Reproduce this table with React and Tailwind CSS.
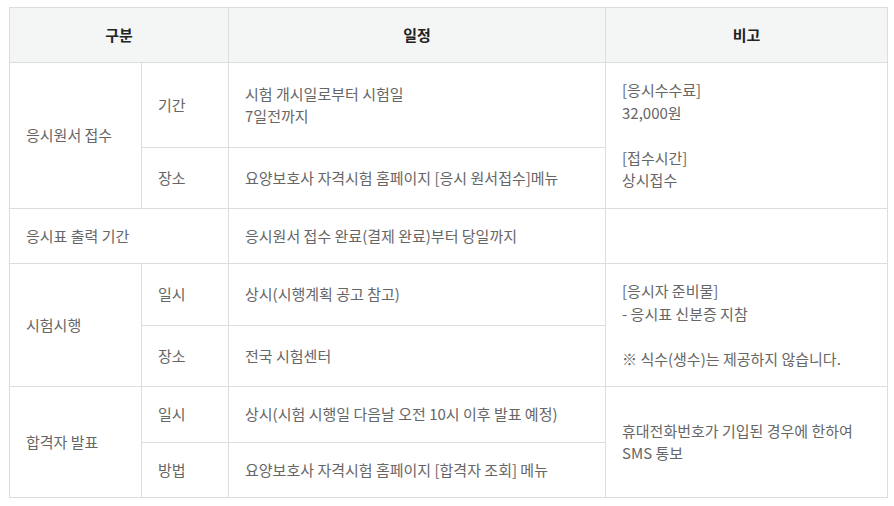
export default function App() {
  const td = "border border-[#dddddd] px-4 py-4 align-middle text-left";
  return (
    <div className="bg-white pt-[7px] pl-[9px] pr-[8px] w-[894px] h-[506px]" style={{ fontFamily: '"Noto Sans CJK KR", "Noto Sans", sans-serif' }}>
      <table className="w-[878px] border-collapse table-fixed text-[15px] leading-[1.5] text-[#666666]">
        <colgroup>
          <col className="w-[132px]" />
          <col className="w-[87px]" />
          <col className="w-[377px]" />
          <col className="w-[282px]" />
        </colgroup>
        <thead>
          <tr className="bg-[#f4f5f5] h-[55px]">
            <th colSpan={2} className="border border-[#dddddd] font-bold text-[#222222] text-center">구분</th>
            <th className="border border-[#dddddd] font-bold text-[#222222] text-center">일정</th>
            <th className="border border-[#dddddd] font-bold text-[#222222] text-center">비고</th>
          </tr>
        </thead>
        <tbody>
          <tr>
            <td rowSpan={2} className={td}>응시원서 접수</td>
            <td className={td}>기간</td>
            <td className={td}>시험 개시일로부터 시험일<br />7일전까지</td>
            <td rowSpan={2} className={td}>
              [응시수수료]<br />32,000원<br /><br />[접수시간]<br />상시접수
            </td>
          </tr>
          <tr>
            <td className={td}>장소</td>
            <td className={td}>요양보호사 자격시험 홈페이지 [응시 원서접수]메뉴</td>
          </tr>
          <tr>
            <td colSpan={2} className={td}>응시표 출력 기간</td>
            <td className={td}>응시원서 접수 완료(결제 완료)부터 당일까지</td>
            <td className={td}></td>
          </tr>
          <tr>
            <td rowSpan={2} className={td}>시험시행</td>
            <td className={td}>일시</td>
            <td className={td}>상시(시행계획 공고 참고)</td>
            <td rowSpan={2} className={td}>
              [응시자 준비물]<br />- 응시표 신분증 지참<br /><br />※ 식수(생수)는 제공하지 않습니다.
            </td>
          </tr>
          <tr>
            <td className={td}>장소</td>
            <td className={td}>전국 시험센터</td>
          </tr>
          <tr>
            <td rowSpan={2} className={td}>합격자 발표</td>
            <td className={td}>일시</td>
            <td className={td}>상시(시험 시행일 다음날 오전 10시 이후 발표 예정)</td>
            <td rowSpan={2} className={td}>
              휴대전화번호가 기입된 경우에 한하여<br />SMS 통보
            </td>
          </tr>
          <tr>
            <td className={td}>방법</td>
            <td className={td}>요양보호사 자격시험 홈페이지 [합격자 조회] 메뉴</td>
          </tr>
        </tbody>
      </table>
    </div>
  );
}
